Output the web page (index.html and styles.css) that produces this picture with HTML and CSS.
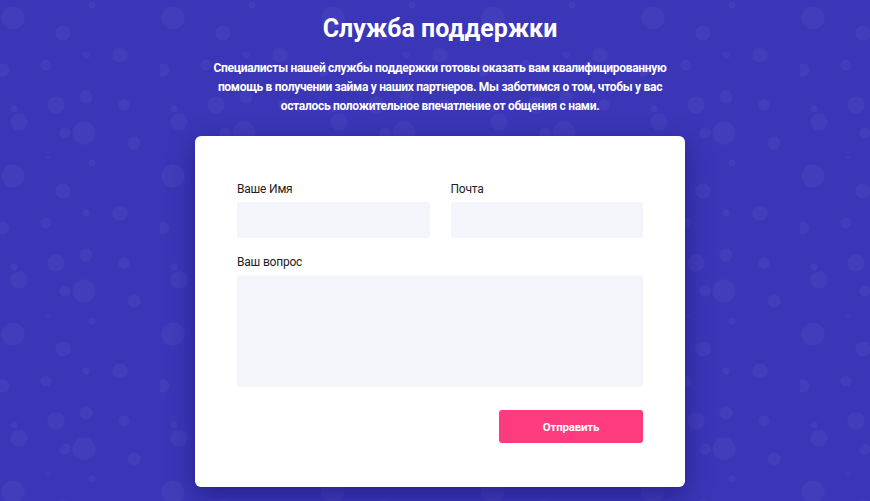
FILE: index.html
```html
<!DOCTYPE html>
<html lang="ru">
<head>
    <meta charset="UTF-8">
    <meta name="viewport" content="width=device-width, initial-scale=1.0">
    <title>Служба поддержки</title>
    <link rel="stylesheet" href="styles.css">
</head>
<body>
    <section class="support">
        <h1>Служба поддержки</h1>
        <p class="lead">Специалисты нашей службы поддержки готовы оказать вам квалифицированную<br>
            помощь в получении займа у наших партнеров. Мы заботимся о том, чтобы у вас<br>
            осталось положительное впечатление от общения с нами.</p>

        <form class="card">
            <div class="row">
                <div class="form-group">
                    <label for="name">Ваше Имя</label>
                    <input type="text" id="name">
                </div>
                <div class="form-group">
                    <label for="email">Почта</label>
                    <input type="email" id="email">
                </div>
            </div>
            <div class="form-group">
                <label for="question">Ваш вопрос</label>
                <textarea id="question"></textarea>
            </div>
            <div class="actions">
                <button type="button">Отправить</button>
            </div>
        </form>
    </section>
</body>
</html>
```

FILE: styles.css
```css
* {
    box-sizing: border-box;
}
html, body {
    height: 100%;
}
body {
    margin: 0;
    overflow: hidden;
    font-family: Roboto, "Liberation Sans", Arial, sans-serif;
    background-color: #3b36b7;
    background-image:
        radial-gradient(circle at 13px 18px, rgba(255,255,255,0.035) 11px, transparent 12px),
        radial-gradient(circle at 63px 33px, rgba(255,255,255,0.035) 7px, transparent 8px),
        radial-gradient(circle at 92px 5px, rgba(255,255,255,0.035) 3px, transparent 4px),
        radial-gradient(circle at 120px 55px, rgba(255,255,255,0.035) 7px, transparent 8px),
        radial-gradient(circle at 86px 55px, rgba(255,255,255,0.035) 3px, transparent 4px),
        radial-gradient(circle at 46px 65px, rgba(255,255,255,0.035) 5px, transparent 6px),
        radial-gradient(circle at 3px 70px, rgba(255,255,255,0.035) 6px, transparent 7px),
        radial-gradient(circle at 86px 97px, rgba(255,255,255,0.035) 6px, transparent 7px),
        radial-gradient(circle at 56px 105px, rgba(255,255,255,0.035) 8px, transparent 9px),
        radial-gradient(circle at 124px 105px, rgba(255,255,255,0.035) 5px, transparent 6px),
        radial-gradient(circle at 14px 109px, rgba(255,255,255,0.035) 3px, transparent 4px),
        radial-gradient(circle at 19px 122px, rgba(255,255,255,0.035) 8px, transparent 9px),
        radial-gradient(circle at 84px 133px, rgba(255,255,255,0.035) 11px, transparent 12px),
        radial-gradient(circle at 65px 133px, rgba(255,255,255,0.035) 5px, transparent 6px),
        radial-gradient(circle at 134px 143px, rgba(255,255,255,0.035) 6px, transparent 7px),
        radial-gradient(circle at 48px 160px, rgba(255,255,255,0.035) 3px, transparent 4px);
    background-size: 160px 158px;
    color: #fff;
}
.support {
    display: flex;
    flex-direction: column;
    align-items: center;
    padding: 13px 0 0 10px;
}
h1 {
    margin: 0;
    font-size: 25px;
    line-height: 32px;
    font-weight: 700;
}
.lead {
    width: 520px;
    margin: 14px 0 0;
    font-size: 12px;
    letter-spacing: -0.3px;
    line-height: 19px;
    font-weight: 700;
    text-align: center;
}
.card {
    width: 490px;
    margin-top: 20px;
    padding: 45px 42px 44px;
    background: #fff;
    border-radius: 6px;
    box-shadow: 0 8px 24px rgba(20, 15, 110, 0.55);
    color: #222;
}
.row {
    display: flex;
    gap: 21px;
}
.row .form-group {
    flex: 1;
}
.form-group {
    margin-bottom: 16px;
}
label {
    display: block;
    font-size: 12px;
    letter-spacing: -0.2px;
    line-height: 16px;
    margin-bottom: 5px;
    color: #222;
}
input, textarea {
    display: block;
    width: 100%;
    border: none;
    border-radius: 3px;
    background: #f4f5fa;
    font-family: inherit;
}
input {
    height: 36px;
}
textarea {
    height: 112px;
    resize: none;
}
.actions {
    display: flex;
    justify-content: flex-end;
    padding-top: 7px;
}
button {
    width: 144px;
    height: 33px;
    border: none;
    border-radius: 3px;
    background: #ff3b80;
    color: #fff;
    font-family: inherit;
    font-size: 11.5px;
    letter-spacing: -0.2px;
    font-weight: 700;
}
```
